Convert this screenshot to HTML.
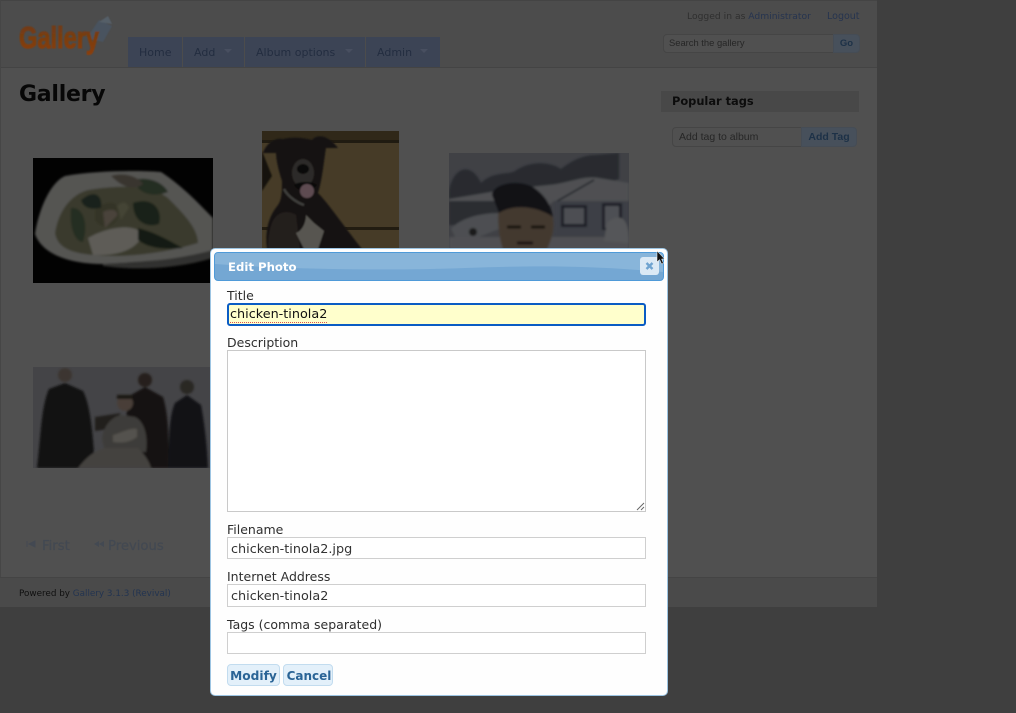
<!DOCTYPE html>
<html><head><meta charset="utf-8"><title>Gallery</title>
<style>
html,body{margin:0;padding:0;width:1016px;height:713px;overflow:hidden;background:#3f3f3f}
body{font-family:"DejaVu Sans","Liberation Sans",sans-serif;position:relative}
.a{position:absolute;white-space:nowrap}
.ph{filter:brightness(.8) saturate(.72)}
.lb{position:absolute;left:227px;font-size:12.5px;line-height:15px;color:#2e2e2e;white-space:nowrap}
.in{position:absolute;left:227px;width:417px;box-sizing:content-box;height:20px;border:1px solid #cfcfcf;background:#fff;font-size:12.8px;line-height:23px;color:#333;text-indent:3px;white-space:nowrap;overflow:hidden}
.nav{position:absolute;top:37px;height:30px;background:#3c4455;color:#232d40;font-size:11px;line-height:32px;white-space:nowrap}
.tri{position:absolute;top:12px;width:0;height:0;border:4px solid transparent;border-top:4px solid #484f60;border-bottom:0}
.btn{position:absolute;top:664px;height:20px;box-sizing:content-box;border:1px solid #c2dcef;border-radius:4px;background:#e3f0fa;color:#2a6496;font-weight:bold;font-size:12.2px;line-height:23px;text-align:center}
</style></head><body>
<div class="a" style="left:0;top:0;width:877px;height:607px;background:#505050"></div>
<div class="a" style="left:0;top:0;width:877px;height:67px;background:#4c4c4c;border-bottom:1px solid #444"></div>
<div class="a" style="left:0;top:0;width:877px;height:1px;background:#444"></div>
<div class="a" style="left:0;top:0;width:1px;height:607px;background:#464646"></div>
<div class="a" style="left:0;top:577px;width:877px;height:30px;background:#4a4a4a;border-top:1px solid #444;box-sizing:border-box"></div>

<svg class="a" style="left:15px;top:12px" width="100" height="46" viewBox="0 0 100 46"><defs><linearGradient id="lg" x1="0" y1="0" x2="0" y2="1"><stop offset="0" stop-color="#6b3a16"/><stop offset="1" stop-color="#8a3f0b"/></linearGradient><filter id="b0"><feGaussianBlur stdDeviation=".4"/></filter></defs><g filter="url(#b0)"><path d="M72 26 L84 8 L97 14 L88 30 Z" fill="#48535f"/><path d="M84 10 L93 4 L97 12 Z" fill="#555e68"/><text x="4" y="36" font-family="Liberation Sans,sans-serif" font-weight="bold" font-size="31" textLength="80" lengthAdjust="spacingAndGlyphs" fill="url(#lg)" stroke="url(#lg)" stroke-width="1.1">Gallery</text></g></svg>

<div class="nav" style="left:128px;width:54px"><span class="a" style="left:11px">Home</span></div>
<div class="nav" style="left:183px;width:61px"><span class="a" style="left:11px">Add</span><i class="tri" style="left:41px"></i></div>
<div class="nav" style="left:245px;width:120px"><span class="a" style="left:11px">Album options</span><i class="tri" style="left:100px"></i></div>
<div class="nav" style="left:366px;width:74px"><span class="a" style="left:11px">Admin</span><i class="tri" style="left:54px"></i></div>

<div class="a" style="left:19px;top:81px;font-size:22px;line-height:28px;font-weight:bold;color:#070707;letter-spacing:-.25px">Gallery</div>

<div class="a" style="left:687px;top:10px;font-size:9.2px;line-height:13px;color:#2f2f2f">Logged in as <span style="color:#26344f">Administrator</span></div>
<div class="a" style="left:827px;top:10px;font-size:9.5px;line-height:13px;color:#26344f">Logout</div>
<div class="a" style="left:663px;top:34px;width:169px;height:17px;border:1px solid #454545;border-radius:4px 0 0 4px;background:#505050;font:9.4px/16px 'Liberation Sans',sans-serif;color:#262626;text-indent:5px">Search the gallery</div>
<div class="a" style="left:833px;top:34px;width:25px;height:17px;border:1px solid #454c55;border-radius:0 4px 4px 0;background:#47505b;font:bold 9.5px/17px 'Liberation Sans',sans-serif;color:#1d3147;text-align:center">Go</div>

<div class="a" style="left:661px;top:91px;width:198px;height:21px;background:#484848;font-size:11.4px;font-weight:bold;line-height:21px;color:#0c0c0c;text-indent:11px">Popular tags</div>
<div class="a" style="left:672px;top:127px;width:128px;height:18px;border:1px solid #454545;border-radius:4px 0 0 4px;background:#505050;font:10.5px/18px 'Liberation Sans',sans-serif;color:#262626;text-indent:6px">Add tag to album</div>
<div class="a" style="left:801px;top:127px;width:54px;height:18px;border:1px solid #454c55;border-radius:0 4px 4px 0;background:#47505b;font:bold 10.5px/18px 'Liberation Sans',sans-serif;color:#1d3147;text-align:center">Add Tag</div>

<!-- bowl -->
<svg class="a ph" style="left:33px;top:158px" width="180" height="125" viewBox="0 0 180 125"><defs><filter id="b1" x="-5%" y="-5%" width="110%" height="110%"><feGaussianBlur stdDeviation="1.1"/></filter></defs><rect width="180" height="125" fill="#020202"/><g filter="url(#b1)"><path d="M2 76 C6 50 18 24 32 18 C60 13 100 12 128 14 C150 28 170 50 180 60 V92 C150 102 100 105 70 106 C40 106 10 98 2 76Z" fill="#6b6b66"/><path d="M70 106 C110 106 150 100 180 92 V100 C140 112 100 112 70 108Z" fill="#3d3d3a"/><path d="M22 75 C26 50 40 36 55 32 C90 26 120 28 135 40 C150 55 165 70 165 85 C130 96 90 100 60 97 C35 95 24 88 22 75Z" fill="#4a4a32"/><path d="M55 80 C72 70 100 64 110 76 C104 92 85 98 60 97Z" fill="#76736a"/><path d="M62 52 C72 42 90 40 85 60 C80 70 68 72 62 62Z" fill="#42422c"/><path d="M100 45 C120 38 130 52 126 66 C115 70 100 65 100 45Z" fill="#1c2a1c"/><path d="M105 70 C125 75 140 85 150 90 C130 92 115 90 105 82Z" fill="#172417"/><path d="M100 22 C115 18 130 24 135 34 C120 40 105 36 100 22Z" fill="#2a3a26"/><path d="M78 18 C90 14 105 18 110 26 C100 34 88 28 78 18Z" fill="#4a4238"/><path d="M38 50 C50 48 56 66 50 84 C42 84 36 70 38 50Z" fill="#2c3a28"/><path d="M48 42 C62 30 70 38 68 50 C58 52 50 50 48 42Z" fill="#1f2c20"/><path d="M84 48 C90 42 94 44 96 50 L88 62Z" fill="#55553a"/><path d="M70 54 C78 50 86 52 84 58 L72 70Z" fill="#5f5244"/></g></svg>

<!-- dog -->
<svg class="a ph" style="left:262px;top:131px" width="137" height="118" viewBox="0 0 137 118"><defs><filter id="b2" x="-5%" y="-5%" width="110%" height="110%"><feGaussianBlur stdDeviation=".9"/></filter></defs><rect width="137" height="118" fill="#5c4a26"/><rect width="137" height="9" fill="#3f3218"/><rect y="9" width="137" height="3" fill="#2b2110"/><rect y="96" width="137" height="3" fill="#2d2310"/><g filter="url(#b2)"><path d="M0 20 L10 45 L0 60Z" fill="#1c150c"/><path d="M1 22 C4 12 14 6 21 8 C28 6 40 6 50 9 C54 3 66 3 76 17 L64 17 C62 30 60 50 56 62 C66 72 78 90 100 118 H5 C3 100 6 86 16 74 C20 68 20 60 20 50 C16 38 14 28 14 22 Z" fill="#1e1712"/><path d="M10 92 C14 82 24 78 34 84 L38 118 H6 C6 108 7 100 10 92Z" fill="#2e2620"/><path d="M44 84 L52 92 L62 100 L56 118 H42 L34 102 C40 100 44 92 44 84Z" fill="#6d6a62"/><ellipse cx="41" cy="42" rx="11" ry="14" fill="#383430"/><ellipse cx="41" cy="38" rx="6" ry="5" fill="#080808"/><path d="M32 54 C36 62 50 62 55 54 C52 50 36 50 32 54Z" fill="#0c0807"/><ellipse cx="45" cy="60" rx="7" ry="7" fill="#7c5c66"/><path d="M22 58 C26 66 36 72 42 74" stroke="#4d4d48" stroke-width="2.5" fill="none"/></g></svg>

<!-- man -->
<svg class="a ph" style="left:449px;top:153px" width="180" height="96" viewBox="0 0 180 96"><defs><filter id="b3" x="-5%" y="-5%" width="110%" height="110%"><feGaussianBlur stdDeviation="1"/></filter></defs><rect width="180" height="96" fill="#4f5159"/><g filter="url(#b3)"><path d="M0 38 C4 14 22 8 32 30 C44 18 60 22 66 18 C80 8 100 8 112 16 C122 8 134 2 146 2 L170 0 V26 L130 40 L100 50 L0 50Z" fill="#30343e"/><path d="M0 46 L60 36 L100 32 C120 30 135 22 150 25 L180 30 V50 L105 48 L90 60 H0Z" fill="#626468"/><path d="M105 50 L145 27" stroke="#1e2330" stroke-width="1.5"/><path d="M105 48 H180 V88 H105Z" fill="#4c505a"/><rect x="112" y="52" width="26" height="22" fill="#232836"/><rect x="115" y="55" width="20" height="16" fill="#5f626b"/><rect x="153" y="50" width="20" height="27" fill="#232836"/><rect x="156" y="53" width="14" height="22" fill="#61646c"/><path d="M0 48 H50 V72 H0Z" fill="#353841"/><path d="M2 76 C10 66 30 60 50 60 V76 L30 84 H6Z" fill="#5f6268"/><circle cx="24" cy="79" r="4" fill="#202022"/><path d="M0 84 H180 V96 H0Z" fill="#636469"/><path d="M158 70 C170 60 180 62 180 90 L155 88Z" fill="#6a6c70"/><path d="M50 54 C62 46 92 46 102 58 C108 72 102 88 98 96 H54 C50 86 48 66 50 54Z" fill="#594636"/><path d="M43 42 C44 30 70 26 84 34 C96 42 102 52 104 64 C90 54 66 50 50 60 Z" fill="#14171f"/><path d="M58 74 H72 M82 74 H96" stroke="#1f1611" stroke-width="3"/><path d="M68 90 H84" stroke="#241812" stroke-width="3"/></g></svg>

<!-- group -->
<svg class="a ph" style="left:33px;top:367px" width="178" height="101" viewBox="0 0 178 101"><defs><filter id="b4" x="-5%" y="-5%" width="110%" height="110%"><feGaussianBlur stdDeviation="1"/></filter></defs><rect width="178" height="101" fill="#55555a"/><g filter="url(#b4)"><path d="M4 101 C8 70 8 40 16 22 L32 16 L50 24 C58 40 60 70 62 101Z" fill="#131313"/><circle cx="32" cy="8" r="7" fill="#4d423a"/><path d="M92 101 C92 70 92 40 98 28 L112 20 L130 30 C136 50 136 75 135 101Z" fill="#1a1815"/><circle cx="112" cy="13" r="7" fill="#332823"/><path d="M135 101 C136 70 136 50 142 36 L154 28 L168 38 C172 60 174 80 175 101Z" fill="#19191a"/><circle cx="154" cy="20" r="7" fill="#35302b"/><path d="M62 50 L88 46 L76 62 L62 64Z" fill="#2b2622"/><path d="M69 72 C70 60 78 50 88 48 L102 50 C112 55 115 70 113 85 L72 85Z" fill="#4e4c46"/><circle cx="92" cy="36" r="8" fill="#5e4e43"/><path d="M84 28 H100 V32 H84Z" fill="#241a14"/><path d="M45 101 C52 92 60 84 72 81 L105 81 C112 88 116 94 118 101Z" fill="#56524d"/><path d="M80 68 C88 66 98 60 104 62 L104 70 C96 76 88 76 80 75Z" fill="#6a665e"/></g></svg>

<svg class="a" style="left:26px;top:540px" width="12" height="8" viewBox="0 0 12 8"><path d="M1 1 V7 M9 1 L3 4 L9 7Z" stroke="#434952" fill="#434952"/></svg>
<div class="a" style="left:42px;top:539px;font-size:13.2px;line-height:16px;color:#434952;-webkit-text-stroke:.25px #434952">First</div>
<svg class="a" style="left:93px;top:540px" width="12" height="8" viewBox="0 0 12 8"><path d="M6 1 L1 4 L6 7Z M11 1 L6 4 L11 7Z" fill="#434952"/></svg>
<div class="a" style="left:108px;top:539px;font-size:13.2px;line-height:16px;color:#434952;-webkit-text-stroke:.25px #434952">Previous</div>
<div class="a" style="left:19px;top:587px;font-size:8.8px;line-height:14px;color:#0f0f0f">Powered by <span style="color:#233450">Gallery 3.1.3 (Revival)</span></div>

<!-- dialog -->
<div class="a" style="left:210px;top:248px;width:456px;height:446px;background:#fefefe;border:1px solid #9cc4e2;border-radius:5px"></div>
<div class="a" style="left:214px;top:252px;width:448px;height:27px;border:1px solid #4f9ad8;border-radius:4px;background:#74a7d3;overflow:hidden">
<svg class="a" style="left:0;top:0" width="448" height="27" viewBox="0 0 448 27"><path d="M0 0 H448 V19 C380 13 330 12 250 15 C170 18 70 16 0 11Z" fill="#88b5da"/></svg>
<div class="a" style="left:13px;top:1px;color:#fff;font-size:11.7px;font-weight:bold;line-height:27px">Edit Photo</div></div>
<div class="a" style="left:640px;top:257px;width:19px;height:18px;border-radius:3px;background:#dbe9f5"></div>
<svg class="a" style="left:640px;top:257px" width="19" height="18" viewBox="0 0 19 18"><path d="M6.5 6 L12.5 12 M12.5 6 L6.5 12" stroke="#6fa3d0" stroke-width="2.4"/></svg>
<svg class="a" style="left:656px;top:250px" width="10" height="16" viewBox="0 0 10 16"><path d="M1 1 L1 12 L3.6 9.6 L5.6 14 L7.4 13.2 L5.6 9 L8.6 9 Z" fill="#111" stroke="#fff" stroke-width=".5"/></svg>

<div class="lb" style="top:288px">Title</div>
<div class="in" style="top:303px;height:19px;width:415px;border:2px solid #0a5cc4;border-radius:3px;background:#ffffcc;color:#111;line-height:20px;text-indent:1px"><span style="border-bottom:1px dotted #d9534f">chicken-tinola2</span></div>
<div class="lb" style="top:335px">Description</div>
<div class="in" style="top:350px;height:160px;border-color:#c9c9c9"></div>
<svg class="a" style="left:636px;top:502px" width="9" height="9" viewBox="0 0 9 9"><path d="M1 8 L8 1 M5 8 L8 5" stroke="#666" stroke-width="1"/></svg>
<div class="lb" style="top:522px">Filename</div>
<div class="in" style="top:537px">chicken-tinola2.jpg</div>
<div class="lb" style="top:569px">Internet Address</div>
<div class="in" style="top:584px;height:21px">chicken-tinola2</div>
<div class="lb" style="top:617px">Tags (comma separated)</div>
<div class="in" style="top:632px"></div>
<div class="btn" style="left:227px;width:51px">Modify</div>
<div class="btn" style="left:283px;width:48px;text-indent:2px;font-size:12px">Cancel</div>
</body></html>
